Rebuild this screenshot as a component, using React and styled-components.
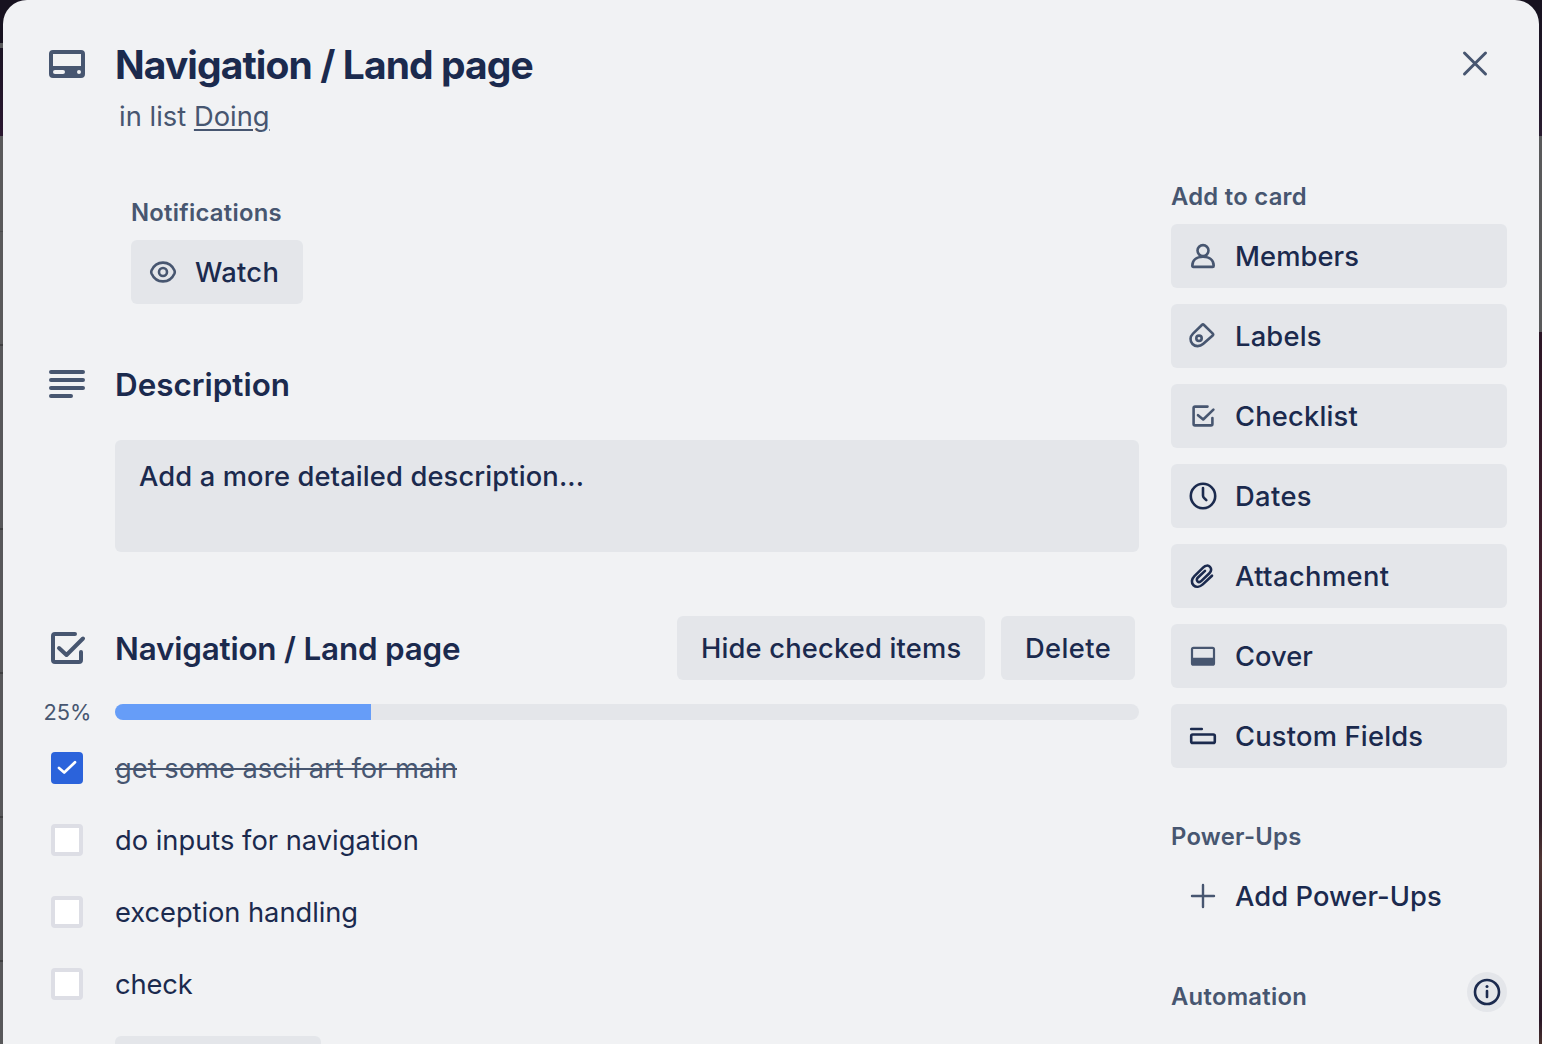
import React from "react";
import styled, { createGlobalStyle } from "styled-components";

const navy = "#1b2a4e";
const slate = "#475670";
const surface = "#f1f2f4";
const fill = "#e4e6ea";

const GlobalStyle = createGlobalStyle`
  * { box-sizing: border-box; }
  html, body { margin: 0; height: 1044px; overflow: hidden; }
  body {
    font-family: Inter, "Liberation Sans", sans-serif;
    color: ${navy};
    -webkit-font-smoothing: antialiased;
  }
  button { font: inherit; color: inherit; border: 0; margin: 0; padding: 0; }
  h1, h2, h3, p, ul { margin: 0; padding: 0; }
`;

const Backdrop = styled.div`
  height: 1044px;
  overflow: hidden;
  padding: 0 3px;
  background:
    linear-gradient(#17121f 0 43px, #58585a 43px 48px, #1b1424 48px, #2b1830 136px, #5a5a5b 136px 231px, #4c4c4d 231px 232px, #5a5a5b 232px 344px, #404041 344px 346px, #58585a 346px 528px, #404041 528px 530px, #58585a 530px 672px, #404041 672px 674px, #58585a 674px 816px, #404041 816px 818px, #58585a 818px 960px, #404041 960px 962px, #58585a 962px) left / 3px 100% no-repeat,
    linear-gradient(#17121f, #2a1c30 136px, #59595b 136px 332px, #2c1626 332px, #45202f 600px, #33202a 820px, #503534 860px, #38242c 950px, #2b1727 1020px, #4b332f) right / 3px 100% no-repeat,
    #17121f;
`;

const Dialog = styled.main`
  display: grid;
  grid-template-columns: 1136px 336px;
  column-gap: 32px;
  align-content: start;
  height: 1100px;
  border-radius: 24px;
  background: ${surface};
`;

const Header = styled.header`
  grid-column: 1 / -1;
  display: grid;
  grid-template-columns: 112px 1fr 64px;
  height: 180px;
  padding-top: 32px;
`;

const Gutter = styled.div`
  display: flex;
  justify-content: center;
  align-items: center;
  width: 112px;
  height: 64px;
  padding-left: 16px;
  flex: none;
`;

const Column = styled.div`
  display: flex;
  flex-direction: column;
`;

const Text = styled.span`
  font-size: ${(p) => p.$size || 27.3}px;
  font-weight: ${(p) => p.$weight || 500};
  letter-spacing: ${(p) => p.$track || 0}px;
  line-height: ${(p) => p.$line || 40}px;
  color: ${(p) => p.$color || "inherit"};
  white-space: nowrap;
`;

const ListLine = styled.div`
  padding: 3px 0 0 4px;
  u { text-decoration-thickness: 2px; text-underline-offset: 3px; text-decoration-skip-ink: auto; }
`;

const CloseButton = styled.button`
  display: flex;
  align-items: center;
  justify-content: center;
  width: 64px;
  height: 64px;
  background: transparent;
`;

const Content = styled.section`
  display: flex;
  flex-direction: column;
`;

const Notifications = styled.div`
  display: flex;
  flex-direction: column;
  align-items: flex-start;
  gap: 7px;
  height: 172px;
  padding: 13px 0 0 128px;
`;

const Button = styled.button`
  display: flex;
  align-items: center;
  width: ${(p) => (p.$width ? `${p.$width}px` : "100%")};
  height: 64px;
  padding-left: ${(p) => (p.$plain ? 24 : 16)}px;
  gap: 16px;
  border-radius: 6px;
  background: ${(p) => (p.$clear ? "transparent" : fill)};
  flex: none;
  ${Text} { padding-top: 2px; }
`;

const Icon = styled.svg`
  display: block;
  flex: none;
  width: ${(p) => p.$size || 32}px;
  height: ${(p) => p.$size || 32}px;
  color: ${(p) => p.$color || slate};
  fill: none;
  stroke: currentColor;
  stroke-width: ${(p) => p.$stroke || 2.6};
  stroke-linecap: round;
  stroke-linejoin: round;
`;

const SectionHead = styled.div`
  display: flex;
  align-items: center;
  height: 64px;
`;

const SectionTitle = styled.h2`
  flex: 1;
  padding-top: 2px;
  line-height: 0;
`;

const HeadActions = styled.div`
  display: flex;
  gap: 16px;
  padding-right: 4px;
`;

const DescriptionBox = styled.div`
  height: 112px;
  margin: 24px 0 64px 112px;
  padding: 17px 24px;
  border-radius: 6px;
  background: ${fill};
`;

const Progress = styled.div`
  display: flex;
  align-items: center;
  height: 16px;
  margin: 24px 0 12px;
`;

const Percent = styled.div`
  display: flex;
  justify-content: center;
  width: 112px;
  padding-left: 17px;
`;

const Track = styled.div`
  flex: 1;
  height: 16px;
  border-radius: 8px;
  background: ${fill};
  overflow: hidden;
`;

const Bar = styled.div`
  height: 100%;
  background: #669df8;
`;

const Item = styled.li`
  display: flex;
  align-items: center;
  height: 72px;
  list-style: none;
`;

const Items = styled.ul`
  display: flex;
  flex-direction: column;
`;

const Checkbox = styled.span`
  display: flex;
  align-items: center;
  justify-content: center;
  width: 32px;
  height: 32px;
  margin: 0 32px 0 48px;
  border: ${(p) => (p.$checked ? "0" : "4px solid #dddee5")};
  border-radius: 4px;
  background: ${(p) => (p.$checked ? "#2b63db" : "#fff")};
`;

const ItemText = styled(Text)`
  padding-top: 2px;
  text-decoration: ${(p) => (p.$done ? "line-through 2px" : "none")};
`;

const AddItem = styled(Button)`
  margin: 16px 0 0 112px;
`;

const Sidebar = styled.aside`
  display: flex;
  flex-direction: column;
`;

const SideLabel = styled.div`
  display: flex;
  align-items: center;
  justify-content: space-between;
  height: ${(p) => p.$height}px;
  padding-top: ${(p) => p.$top || 0}px;
  padding-bottom: ${(p) => p.$bottom || 0}px;
`;

const SideList = styled.div`
  display: flex;
  flex-direction: column;
  gap: 16px;
`;

const InfoBadge = styled.button`
  display: flex;
  align-items: center;
  justify-content: center;
  width: 40px;
  height: 40px;
  margin-bottom: 10px;
  border-radius: 50%;
  background: ${fill};
`;

const icons = {
  members: { d: <><circle cx="16" cy="10.6" r="5.500" /><path d="M5.300 25.700c0-5.400 4-9 10.700-9s10.700 3.600 10.700 9c0 .8-.4 1.200-1.100 1.200H6.400c-.7 0-1.100-.4-1.100-1.200Z" /></> },
  labels: { d: <><path d="M14.900 5 6 13.600C2.800 16.700 2.800 21.200 5.500 24c2.900 2.900 7.400 2.800 10.500 0l9.700-8.500c.7-.6.7-1.300.1-1.900L17 5c-.7-.7-1.400-.7-2.100 0Z" /><circle cx="12" cy="18.300" r="2.700" /></> },
  checklist: { d: <><path d="M20.500 6.600H8c-.9 0-1.400.5-1.400 1.400v16c0 .9.5 1.400 1.400 1.400h16c.9 0 1.400-.5 1.400-1.400v-6M11 15.200l5.200 4.300 10.200-9.900" /></> },
  dates: { color: navy, d: <><circle cx="16" cy="16" r="12.200" /><path d="M16 8v7.500c0 1 .3 1.600 1 2.300l2.300 2.300" /></> },
  attachment: { color: navy, d: <path d="m25 15.700-9.200 8.700c-3 2.800-6.900 3.100-9.300.8s-2.100-6.200.9-9.100l8.900-8.700c2.200-2.100 5-2.300 6.700-.6s1.500 4.500-.6 6.500l-8 7.600c-1.400 1.300-2.900 1.400-3.900.4s-.9-2.500.5-3.800l7-6.600" /> },
  cover: { d: <><rect x="5" y="7.800" width="22" height="16.900" rx="1.500" strokeWidth="2.200" /><path d="M5.500 17.800h21v5.900c0 .7-.4 1-1 1h-19c-.7 0-1-.3-1-1Z" fill="currentColor" stroke="none" /></> },
  fields: { color: navy, d: <><path d="M4.200 9h10.600" /><rect x="4.200" y="14.500" width="23.600" height="8.400" rx="1.500" /></> },
  plus: { d: <path d="M16 5v22M5 16h22" />, stroke: 2.4 },
  eye: { d: <><path d="M4.500 14.500C6.700 9.600 10.700 6.600 16 6.600s9.300 3 11.500 7.900c.4 1 .4 2 0 3C25.300 22.400 21.300 25.400 16 25.400S6.700 22.400 4.500 17.500c-.4-1-.4-2 0-3Z" /><circle cx="16" cy="16" r="4" /></> },
};

const Glyph = ({ name }) => (
  <Icon viewBox="0 0 32 32" $color={icons[name].color} $stroke={icons[name].stroke}>{icons[name].d}</Icon>
);

const actions = [
  ["members", "Members", 0.1],
  ["labels", "Labels", 0.2],
  ["checklist", "Checklist", 0.18],
  ["dates", "Dates", 0.4],
  ["attachment", "Attachment", 0.42],
  ["cover", "Cover", 0],
  ["fields", "Custom Fields", 0.2],
];

const items = [
  { text: "get some ascii art for main", done: true, track: 0 },
  { text: "do inputs for navigation", track: 0 },
  { text: "exception handling", track: -0.05 },
  { text: "check", track: -0.1 },
];

const Label = ({ children, track = 0.28 }) => (
  <Text as="h3" $size={23.8} $weight={600} $color={slate} $track={track}>{children}</Text>
);

export default function App() {
  return (
    <>
      <GlobalStyle />
      <Backdrop>
        <Dialog>
          <Header>
            <Gutter>
              <Icon viewBox="0 0 48 48" $size={48}>
                <path fill="currentColor" stroke="none" fillRule="evenodd" d="M10 10h28a4 4 0 0 1 4 4v20a4 4 0 0 1-4 4H10a4 4 0 0 1-4-4V14a4 4 0 0 1 4-4Zm0 4v12h28V14H10Zm2 16a2 2 0 0 0 0 4h8a2 2 0 0 0 0-4h-8Zm24 0a2 2 0 1 0 0 4 2 2 0 0 0 0-4Z" />
              </Icon>
            </Gutter>
            <Column>
              <Text as="h1" $size={39} $weight={650} $line={66} $track={-0.91}>Navigation / Land page</Text>
              <ListLine>
                <Text $weight={400} $line={32} $color={slate} $track={0.03}>in list <u>Doing</u></Text>
              </ListLine>
            </Column>
            <CloseButton aria-label="Close">
              <Icon viewBox="0 0 32 32" $stroke={3}><path d="M5.500 5 26.500 26M26.500 5 5.500 26" /></Icon>
            </CloseButton>
          </Header>

          <Content>
            <Notifications>
              <Label>Notifications</Label>
              <Button $width={172}><Glyph name="eye" /><Text $track={0.3}>Watch</Text></Button>
            </Notifications>

            <SectionHead>
              <Gutter>
                <Icon viewBox="0 0 48 48" $size={48} $stroke={4}><path d="M8 12h32M8 20h32M8 28h32M8 36h20" /></Icon>
              </Gutter>
              <SectionTitle><Text $size={31.4} $weight={630}>Description</Text></SectionTitle>
            </SectionHead>
            <DescriptionBox><Text $track={0.13}>Add a more detailed description...</Text></DescriptionBox>

            <SectionHead>
              <Gutter>
                <Icon viewBox="0 0 48 48" $size={48} $stroke={4}>
                  <path d="M32 10H12c-1.300 0-2 .7-2 2v24c0 1.300.7 2 2 2h24c1.300 0 2-.7 2-2V28M16 24l7.500 7L40 14.500" />
                </Icon>
              </Gutter>
              <SectionTitle><Text $size={31.4} $weight={630} $track={-0.19}>Navigation / Land page</Text></SectionTitle>
              <HeadActions>
                <Button $width={308} $plain><Text $track={0.18}>Hide checked items</Text></Button>
                <Button $width={134} $plain><Text $track={0.4}>Delete</Text></Button>
              </HeadActions>
            </SectionHead>
            <Progress>
              <Percent><Text $size={21.8} $weight={400} $color={slate}>25%</Text></Percent>
              <Track><Bar style={{ width: "25%" }} /></Track>
            </Progress>
            <Items>
              {items.map((item) => (
                <Item key={item.text}>
                  <Checkbox $checked={item.done}>
                    {item.done && <Icon viewBox="0 0 32 32" $color="#fff" $stroke={2.7}><path d="m8 16 5.200 4.500L24 10.300" /></Icon>}
                  </Checkbox>
                  <ItemText $weight={400} $done={item.done} $color={item.done ? slate : navy} $track={item.track}>{item.text}</ItemText>
                </Item>
              ))}
            </Items>
            <AddItem $width={206} aria-label="Add an item" />
          </Content>

          <Sidebar>
            <SideLabel $height={44} $bottom={10}><Label>Add to card</Label></SideLabel>
            <SideList>
              {actions.map(([icon, label, track]) => (
                <Button key={label}><Glyph name={icon} /><Text $track={track}>{label}</Text></Button>
              ))}
            </SideList>
            <SideLabel $height={96} $top={42}><Label>Power-Ups</Label></SideLabel>
            <Button $clear><Glyph name="plus" /><Text $track={0.08}>Add Power-Ups</Text></Button>
            <SideLabel $height={96} $top={42}>
              <Label>Automation</Label>
              <InfoBadge aria-label="About automation">
                <Icon viewBox="0 0 32 32" $color={navy}><circle cx="16" cy="16" r="12" /><path d="M16 15v6" /><circle cx="16" cy="10.600" r="1.500" fill="currentColor" stroke="none" /></Icon>
              </InfoBadge>
            </SideLabel>
          </Sidebar>
        </Dialog>
      </Backdrop>
    </>
  );
}
